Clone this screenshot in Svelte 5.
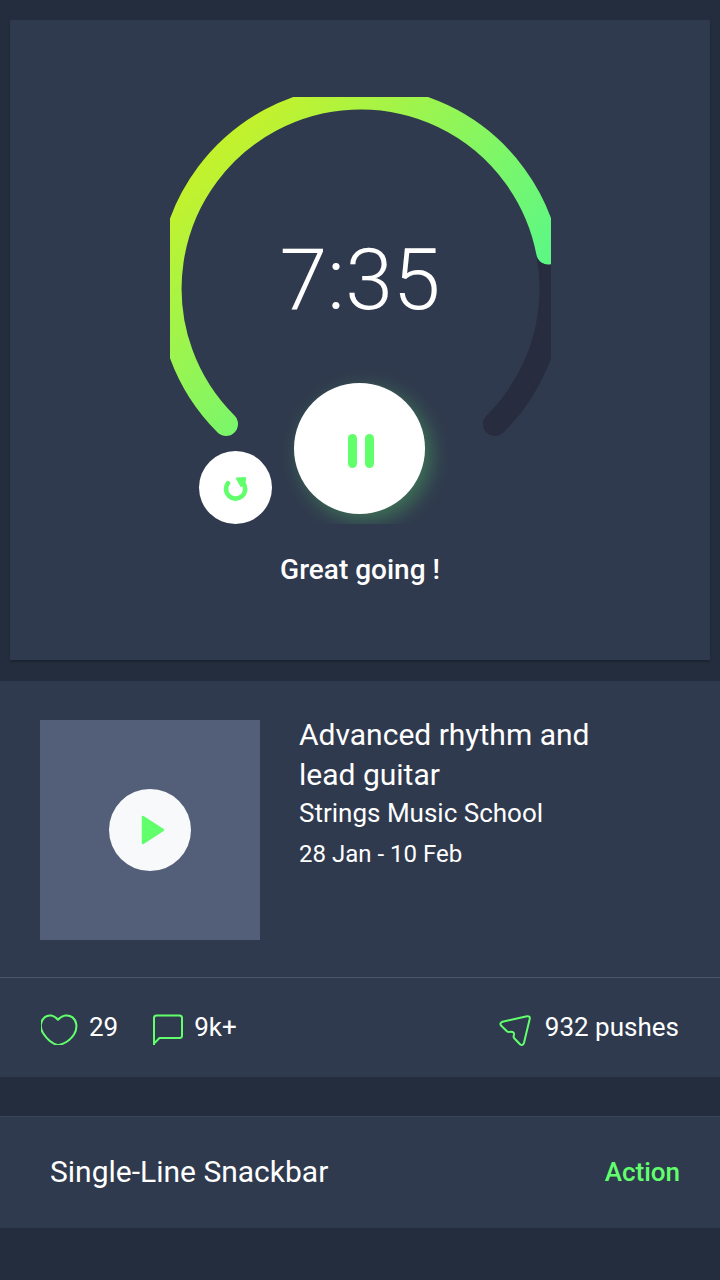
<script>
  let playing = $state(true);
</script>

<main>
  <section class="timer">
    <div class="gauge">
      <svg class="dial" viewBox="0 0 381 341" aria-hidden="true">
        <defs>
          <linearGradient id="progress" gradientUnits="userSpaceOnUse" x1="55" y1="55" x2="265" y2="265">
            <stop offset="0" stop-color="#c2f22e" />
            <stop offset="0.64" stop-color="#7ff667" />
            <stop offset="1" stop-color="#5ef784" />
          </linearGradient>
        </defs>
        <path d="M56 327A191 191 0 1 1 325 327" stroke="#272d3f" />
        <path d="M56 327A191 191 0 1 1 378.200 155.500" stroke="url(#progress)" />
      </svg>
      <time class="clock">7:35</time>
      <div class="controls">
        <button class="round restart" aria-label="Restart">
          <svg width="26" height="26" viewBox="0 0 26 26" aria-hidden="true">
            <path d="M5 8.200A9.600 9.600 0 1 0 20.500 8.600" fill="none" stroke="#62ff6d" stroke-width="4.600" stroke-linecap="round" />
            <path d="M13.500 3.200L21.500 2.700Q22.500 2.700 22.400 3.700L21.500 9.500L18 11.200Z" fill="#62ff6d" stroke="#62ff6d" stroke-width="1.500" stroke-linejoin="round" />
          </svg>
        </button>
        <button class="round pause" aria-label={playing ? 'Pause' : 'Resume'} onclick={() => (playing = !playing)}>
          <svg width="26" height="34" viewBox="0 0 26 34" aria-hidden="true">
            <rect width="9" height="34" rx="4.500" fill="#62ff6d" />
            <rect x="17" width="9" height="34" rx="4.500" fill="#62ff6d" />
          </svg>
        </button>
      </div>
    </div>
    <p class="cheer">Great going !</p>
  </section>

  <article class="course">
    <div class="summary">
      <div class="thumb">
        <button class="round play" aria-label="Play">
          <svg width="24" height="30" viewBox="0 0 24 30" aria-hidden="true">
            <path d="M2 2V28L22 15Z" fill="#62ff6d" stroke="#62ff6d" stroke-width="2.500" stroke-linejoin="round" />
          </svg>
        </button>
      </div>
      <div class="details">
        <h2>Advanced rhythm and lead guitar</h2>
        <p class="school">Strings Music School</p>
        <p class="dates">28 Jan - 10 Feb</p>
      </div>
    </div>
    <div class="stats">
      <button class="stat likes" aria-label="29 likes">
        <svg width="37" height="31" viewBox="0 0 37 31" aria-hidden="true">
          <path d="M17 5.800C13 .8 7.500 .3 3.500 3.400C-1 7.200-1.200 14 2 19C5.500 24.500 11 29.700 17 31.200C24.500 29.700 30 25 33 20.500C36.800 14 36 7 31.500 3.400C27.500 .3 21 .8 17 5.800Z" />
        </svg>
        <span>29</span>
      </button>
      <button class="stat comments" aria-label="9k+ comments">
        <svg width="30" height="31" viewBox="0 0 30 31" aria-hidden="true">
          <path d="M1 31V4Q1 1.500 3.500 1.500H26.500Q29 1.500 29 4V21.500Q29 24 26.500 24H6.500L1 29.500" />
        </svg>
        <span>9k+</span>
      </button>
      <button class="stat pushes" aria-label="932 pushes">
        <svg width="33" height="32" viewBox="0 0 33 32" aria-hidden="true">
          <path d="M3.500 7.800L28 2.200Q31.300 1.900 30.700 5L25 28.800Q23.700 32.300 21 30.200L15.500 24.500Q14 22.800 15 21Q15.500 17.500 11.500 17.700Q9.700 18.500 8.200 17.500L2 11.500Q.3 9 3.500 7.800Z" />
        </svg>
        <span>932 pushes</span>
      </button>
    </div>
  </article>

  <div class="snackbar" role="status">
    <span>Single-Line Snackbar</span>
    <button class="action">Action</button>
  </div>
</main>

<style>
  :global(body) {
    margin: 0;
    background: #232d3d;
  }
  main {
    font-family: Roboto, sans-serif;
    color: #fff;
    padding-top: 20px;
  }
  h2,
  p {
    margin: 0;
    font-weight: 400;
  }
  button {
    padding: 0;
    border: 0;
    background: none;
    color: inherit;
    font: inherit;
    cursor: pointer;
  }
  svg {
    display: block;
    flex: none;
  }
  .timer {
    margin: 0 10px 21px;
    padding: 77px 0 74px;
    background: #303a4e;
    border-radius: 1px;
    box-shadow: 0 2px 2px rgb(0 0 0 / 20%);
    display: flex;
    flex-direction: column;
    align-items: center;
  }
  .gauge {
    display: grid;
    width: 381px;
    grid-template-rows: 341px 86px;
  }
  .dial {
    grid-area: 1 / 1;
    width: 100%;
    fill: none;
    stroke-width: 24px;
    stroke-linecap: round;
    overflow: hidden;
  }
  .clock {
    grid-area: 1 / 1;
    align-self: center;
    text-align: center;
    font-size: 86px;
    line-height: 100px;
    font-weight: 300;
    padding-top: 24px;
  }
  .controls {
    grid-area: 1 / 1 / 3 / 2;
    align-self: end;
    display: flex;
    align-items: flex-end;
    gap: 22px;
    padding: 20px 0 0 29px;
    overflow: hidden;
  }
  .round {
    flex: none;
    display: grid;
    place-items: center;
    border-radius: 50%;
    background: #fff;
  }
  .restart {
    width: 73px;
    height: 73px;
    padding-left: 2px;
  }
  .pause {
    width: 131px;
    height: 131px;
    margin-bottom: 10px;
    padding: 4px 0 0 3px;
    box-shadow: 6px 6px 20px rgb(98 255 109 / 30%);
  }
  .cheer {
    margin-top: 30px;
    font-size: 28px;
    line-height: 32px;
    font-weight: 500;
  }
  .course {
    background: #303a4e;
  }
  .summary {
    display: flex;
    gap: 39px;
    padding: 39px 40px 37px;
  }
  .thumb {
    flex: none;
    width: 220px;
    height: 220px;
    display: grid;
    place-items: center;
    background: #535f78;
  }
  .play {
    width: 82px;
    height: 82px;
    padding-left: 6px;
    background: #f8f9fb;
  }
  .details {
    max-width: 320px;
  }
  h2 {
    margin-top: -5px;
    font-size: 30px;
    line-height: 40px;
  }
  .school {
    font-size: 26px;
    line-height: 36px;
  }
  .dates {
    font-size: 24px;
    line-height: 46px;
  }
  .stats {
    display: flex;
    align-items: center;
    gap: 35px;
    height: 97px;
    padding: 0 41px 2px;
    border-top: 1px solid #4a556a;
    font-size: 26px;
  }
  .stat {
    display: flex;
    align-items: center;
    gap: 11px;
  }
  .stat svg {
    margin-top: 6px;
    fill: none;
    stroke: #62ff6d;
    stroke-width: 2px;
    stroke-linejoin: round;
  }
  .pushes {
    margin-left: auto;
    gap: 13px;
  }
  .snackbar {
    display: flex;
    align-items: center;
    justify-content: space-between;
    height: 109px;
    margin-top: 39px;
    padding: 0 40px 2px 50px;
    border-top: 1px solid #3a465b;
    background: #303a4e;
    font-size: 30px;
  }
  .action {
    font-size: 26px;
    font-weight: 500;
    color: #62ff6d;
  }
</style>
